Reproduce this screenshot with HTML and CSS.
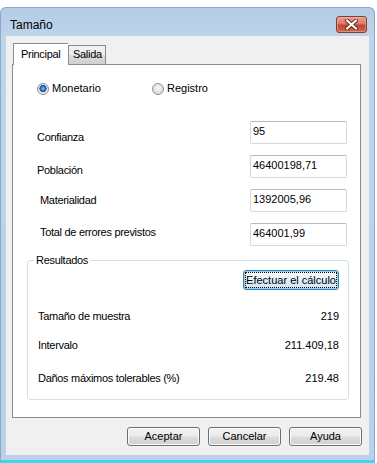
FILE: index.html
```html
<!DOCTYPE html>
<html lang="es">
<head>
  <meta charset="UTF-8">
  <title>Tamaño</title>
  <link rel="stylesheet" href="styles.css">
</head>
<body>
  <div class="window">
    <div class="titlebar">
      <span class="title">Tamaño</span>
      <button class="close-btn">
        <svg width="15" height="11" viewBox="0 0 15 11">
          <path d="M3 1.5 L12 9.5 M12 1.5 L3 9.5" stroke="#6b2418" stroke-width="4" stroke-linecap="round"/>
          <path d="M3 1.5 L12 9.5 M12 1.5 L3 9.5" stroke="#fff" stroke-width="2.2" stroke-linecap="round"/>
        </svg>
      </button>
    </div>
    <div class="client">
      <div class="tabs">
        <div class="tab tab-active">Principal</div>
        <div class="tab">Salida</div>
      </div>
      <div class="tab-panel">
        <div class="radio-row">
          <label class="radio-item radio-first"><span class="radio radio-checked"></span>Monetario</label>
          <label class="radio-item"><span class="radio"></span>Registro</label>
        </div>
        <div class="form">
          <div class="form-row">
            <span class="form-label label-a">Confianza</span>
            <div class="textbox">95</div>
          </div>
          <div class="form-row">
            <span class="form-label label-b">Población</span>
            <div class="textbox">46400198,71</div>
          </div>
          <div class="form-row">
            <span class="form-label label-c">Materialidad</span>
            <div class="textbox">1392005,96</div>
          </div>
          <div class="form-row">
            <span class="form-label label-d">Total de errores previstos</span>
            <div class="textbox">464001,99</div>
          </div>
        </div>
        <fieldset class="group">
          <legend>Resultados</legend>
          <div class="group-actions">
            <button class="btn btn-default">Efectuar el cálculo</button>
          </div>
          <div class="result-row result-first">
            <span class="result-label">Tamaño de muestra</span>
            <span class="result-value">219</span>
          </div>
          <div class="result-row result-second">
            <span class="result-label">Intervalo</span>
            <span class="result-value">211.409,18</span>
          </div>
          <div class="result-row result-third">
            <span class="result-label">Daños máximos tolerables (%)</span>
            <span class="result-value">219.48</span>
          </div>
        </fieldset>
      </div>
      <div class="dialog-buttons">
        <button class="btn">Aceptar</button>
        <button class="btn">Cancelar</button>
        <button class="btn">Ayuda</button>
      </div>
    </div>
  </div>
</body>
</html>
```

FILE: styles.css
```css
html, body {
  margin: 0; padding: 0;
  background: #fff;
  font-family: 'Liberation Sans', Arial, sans-serif;
  font-size: 11px;
  color: #000;
}
.window {
  margin-top: 7px;
  width: 375px;
  box-sizing: border-box;
  padding: 0 5px 5px 5px;
  background: linear-gradient(180deg, #b4cce6 0px, #bed4eb 30px, #b9d1ea 100%);
  border: 1px solid #8ea7c2;
  border-bottom: 3px solid #3fd4ea;
  border-radius: 6px 6px 0 0;
}
.titlebar {
  display: flex;
  align-items: flex-start;
  height: 28px;
}
.title {
  margin: 10px 0 0 4px;
  font-size: 12px;
  line-height: 14px;
}
.close-btn {
  margin: 8px 2px 0 auto;
  width: 31px; height: 17px;
  padding: 0;
  display: flex; align-items: center; justify-content: center;
  border: 1px solid #8a3b2e;
  border-radius: 3px;
  background: linear-gradient(180deg, #e7a395 0%, #d47a68 45%, #c2452f 55%, #cf6a4c 100%);
  box-shadow: inset 0 0 0 1px #eeb7aa80;
}
.client {
  height: 419px;
  box-sizing: border-box;
  background: #f0f0f0;
  padding-top: 7px;
}

.tabs {
  display: flex;
  align-items: flex-end;
  height: 21px;
  margin-left: 7px;
  position: relative;
  z-index: 1;
}
.tab {
  box-sizing: border-box;
  height: 19px;
  padding: 2px 0 0 4px;
  width: 38px;
  line-height: 13px;
  border: 1px solid #898c95;
  border-bottom: none;
  background: linear-gradient(180deg, #f3f3f3 0%, #ebebeb 50%, #dddddd 51%, #cfcfcf 100%);
  letter-spacing: -0.3px;
}
.tab-active {
  height: 22px;
  width: 55px;
  margin-bottom: -1px;
  padding: 4px 0 0 7px;
  background: #fff;
  border-right: none;
}
.tab-panel {
  margin-left: 6px;
  width: 349px;
  height: 354px;
  box-sizing: border-box;
  background: #fff;
  border: 1px solid #898c95;
}

.radio-row {
  display: flex;
  margin-top: 17px;
  padding-left: 24px;
}
.radio-item {
  display: flex;
  align-items: center;
  gap: 3px;
  height: 13px;
  line-height: 13px;
}
.radio-first { width: 115px; }
.radio {
  width: 10px; height: 10px;
  border-radius: 50%;
  border: 1px solid #8f8f8f;
  background: radial-gradient(circle at 50% 40%, #f6f6f6 0%, #dcdcdc 70%, #cfcfcf 100%);
}
.radio-checked {
  background: radial-gradient(circle at 50% 45%, #7fc4f5 0%, #2a7fd0 28%, #174f96 45%, #e6e6e6 52%, #f4f4f4 100%);
}

.form {
  display: flex;
  flex-direction: column;
  gap: 11px;
  margin-top: 26px;
}
.form-row {
  display: flex;
  align-items: flex-start;
  height: 23px;
  padding-left: 24px;
}
.form-label {
  line-height: 13px;
  letter-spacing: -0.3px;
}
.label-a { padding-top: 10px; }
.label-b { padding-top: 9px; }
.label-c { padding-top: 5px; margin-left: 3px; }
.label-d { padding-top: 3px; margin-left: 3px; }
.textbox {
  margin: 0 13px 0 auto;
  width: 97px; height: 23px;
  box-sizing: border-box;
  padding: 3px 0 0 2px;
  line-height: 13px;
  border: 1px solid #d5d9de;
  border-top-color: #b6b9bf;
  border-radius: 2px;
  background: #fff;
}

.group {
  margin: 8px 0 0 14px;
  width: 322px;
  box-sizing: border-box;
  padding: 0 9px 14px 10px;
  border: 1px solid #d5dfe5;
  border-radius: 3px;
}
.group legend {
  padding: 0 2px;
  margin-left: -4px;
  line-height: 13px;
  letter-spacing: -0.3px;
}
.group-actions {
  display: flex;
  justify-content: flex-end;
  margin-top: 3px;
}
.result-row {
  display: flex;
  justify-content: space-between;
  line-height: 13px;
}
.result-first { margin-top: 20px; }
.result-second { margin-top: 16px; }
.result-third { margin-top: 20px; }
.result-label { letter-spacing: -0.3px; }

.btn {
  box-sizing: border-box;
  width: 73px; height: 19px;
  padding: 0;
  font-family: inherit;
  font-size: 11px;
  line-height: 15px;
  color: #000;
  border: 1px solid #707070;
  border-radius: 3px;
  background: linear-gradient(180deg, #f2f2f2 0%, #ebebeb 48%, #dddddd 52%, #cfcfcf 100%);
  box-shadow: inset 0 0 0 1px #fbfbfb;
}
.btn-default {
  width: auto; height: 20px;
  padding: 0 2px;
  border-color: #3c7fb1;
  background: linear-gradient(180deg, #f7fbfe 0%, #eaf4fb 48%, #dcecf8 52%, #d2e6f5 100%);
  box-shadow: inset 0 0 0 1px #8fd3f5;
  outline: 1px dotted #000;
  outline-offset: -3px;
}
.dialog-buttons {
  display: flex;
  justify-content: flex-end;
  gap: 8px;
  margin-top: 9px;
  padding-right: 7px;
}
```
